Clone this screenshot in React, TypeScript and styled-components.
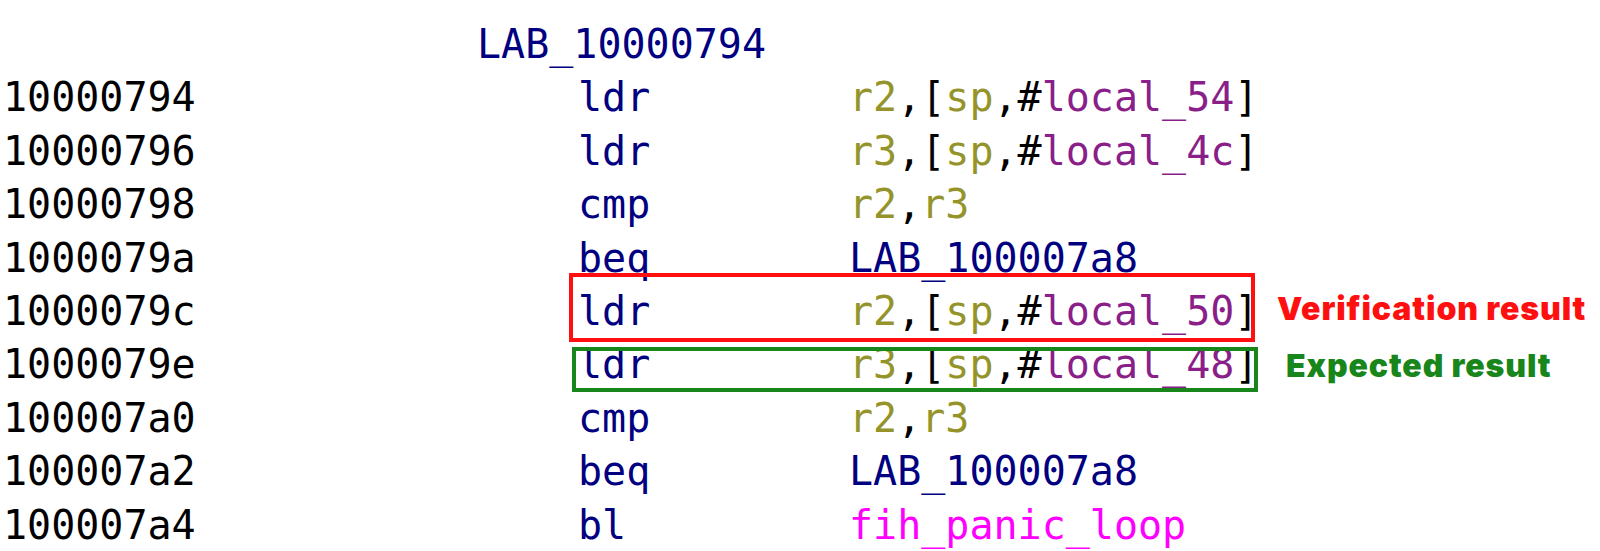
import React from "react";
import styled, { createGlobalStyle } from "styled-components";

const Global = createGlobalStyle`
  html, body { margin: 0; padding: 0; background: #ffffff; }
  body { width: 1600px; height: 551px; overflow: hidden; }
`;

const Listing = styled.div`
  display: flex;
  flex-direction: column;
  padding: 18px 0 0 3px;
  font-family: "DejaVu Sans Mono", monospace;
  font-size: 40px;
  line-height: 53.4px;
  white-space: pre;
  color: #000;
`;

const LabelRow = styled.div`
  padding-left: 474px;
  color: #000080;
  height: 53.4px;
`;

const Row = styled.div`
  position: relative;
  display: grid;
  grid-template-columns: 575px 271px 428px auto;
  height: 53.4px;
  align-items: start;
`;

const Addr = styled.span`
  color: #000;
`;

const Mnem = styled.span`
  color: #000080;
`;

const Operands = styled.span``;

const Tok = styled.span<{ $kind: "reg" | "var" | "punct" | "label" | "func" }>`
  color: ${(p) =>
    p.$kind === "reg"
      ? "#94942a"
      : p.$kind === "var"
      ? "#8a1f8a"
      : p.$kind === "label"
      ? "#000080"
      : p.$kind === "func"
      ? "#ff00ff"
      : "#000"};
`;

const Box = styled.div<{ $color: string; $top: number; $left: number; $height: number }>`
  position: absolute;
  top: ${(p) => p.$top}px;
  left: ${(p) => p.$left}px;
  width: 686px;
  height: ${(p) => p.$height}px;
  border: 4px solid ${(p) => p.$color};
  box-sizing: border-box;
  pointer-events: none;
`;

const Note = styled.span<{ $color: string; $shift: number; $lift: number }>`
  font-family: Inter, "Open Sans", sans-serif;
  font-weight: 900;
  font-size: 32px;
  letter-spacing: 0.9px;
  color: ${(p) => p.$color};
  padding-left: ${(p) => p.$shift}px;
  position: relative;
  top: ${(p) => p.$lift}px;
`;

type T = [string, "reg" | "var" | "punct" | "label" | "func"];

type Line = {
  addr: string;
  mnem: string;
  ops: T[];
  box?: { color: string; top: number; left: number; height: number };
  note?: { text: string; color: string; shift: number; lift: number };
};

const mem = (r: string, v: string): T[] => [
  [r, "reg"],
  [",[", "punct"],
  ["sp", "reg"],
  [",#", "punct"],
  [v, "var"],
  ["]", "punct"],
];

const RED = "#ff1010";
const GREEN = "#18861a";

const lines: Line[] = [
  { addr: "10000794", mnem: "ldr", ops: mem("r2", "local_54") },
  { addr: "10000796", mnem: "ldr", ops: mem("r3", "local_4c") },
  { addr: "10000798", mnem: "cmp", ops: [["r2", "reg"], [",", "punct"], ["r3", "reg"]] },
  { addr: "1000079a", mnem: "beq", ops: [["LAB_100007a8", "label"]] },
  {
    addr: "1000079c",
    mnem: "ldr",
    ops: mem("r2", "local_50"),
    box: { color: RED, top: -12, left: 566, height: 69 },
    note: { text: "Verification result", color: RED, shift: 0, lift: -3 },
  },
  {
    addr: "1000079e",
    mnem: "ldr",
    ops: mem("r3", "local_48"),
    box: { color: GREEN, top: 9, left: 569, height: 45 },
    note: { text: "Expected result", color: GREEN, shift: 9, lift: 1 },
  },
  { addr: "100007a0", mnem: "cmp", ops: [["r2", "reg"], [",", "punct"], ["r3", "reg"]] },
  { addr: "100007a2", mnem: "beq", ops: [["LAB_100007a8", "label"]] },
  { addr: "100007a4", mnem: "bl", ops: [["fih_panic_loop", "func"]] },
];

export default function App() {
  return (
    <>
      <Global />
      <Listing>
        <LabelRow>LAB_10000794</LabelRow>
        {lines.map((l) => (
          <Row key={l.addr}>
            <Addr>{l.addr}</Addr>
            <Mnem>{l.mnem}</Mnem>
            <Operands>
              {l.ops.map(([t, k], i) => (
                <Tok key={i} $kind={k}>
                  {t}
                </Tok>
              ))}
            </Operands>
            {l.note ? (
              <Note $color={l.note.color} $shift={l.note.shift} $lift={l.note.lift}>
                {l.note.text}
              </Note>
            ) : (
              <span />
            )}
            {l.box && (
              <Box
                $color={l.box.color}
                $top={l.box.top}
                $left={l.box.left}
                $height={l.box.height}
              />
            )}
          </Row>
        ))}
      </Listing>
    </>
  );
}
